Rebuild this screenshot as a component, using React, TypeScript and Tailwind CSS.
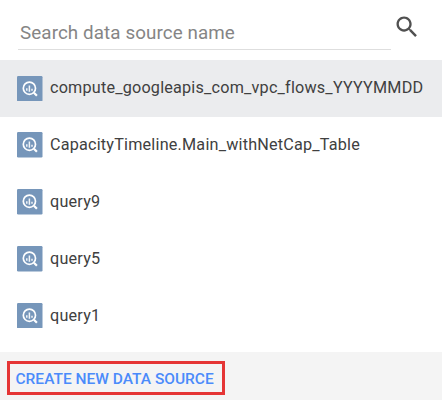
const sources = [
  'compute_googleapis_com_vpc_flows_YYYYMMDD',
  'CapacityTimeline.Main_withNetCap_Table',
  'query9',
  'query5',
  'query1',
];

function QueryIcon() {
  return (
    <svg className="h-[25.5px] w-[25.5px] shrink-0" viewBox="0 0 25.5 25.5" fill="none">
      <rect width="25.5" height="25.5" rx="1.2" fill="#7696ba" />
      <circle cx="12.4" cy="12.2" r="6.1" stroke="#fff" strokeWidth="1.7" />
      <path d="m16.9 16.7 3 3" stroke="#fff" strokeWidth="2.2" />
      <path d="M9.8 12.2v2.5M12.4 9.6v6.2M15 12.8v1.9" stroke="#fff" strokeOpacity=".9" strokeWidth="1.5" />
    </svg>
  );
}

export default function App() {
  return (
    <main className="flex h-[400px] w-[442px] flex-col overflow-hidden bg-white font-['Roboto',sans-serif]">
      <header className="flex h-[60px] shrink-0 pl-[18px]">
        <div className="flex h-[50px] w-[373px] shrink-0 items-end border-b border-[#dedede] pb-[3px] pl-[2px]">
          <span className="whitespace-nowrap text-[18.8px] leading-[26px] tracking-[0.1px] text-[#858585]">Search data source name</span>
        </div>
        <svg className="mt-[12.5px] ml-[2px] h-[28px] w-[28px] shrink-0" viewBox="0 0 24 24" fill="#505050">
          <path d="M15.5 14h-.79l-.28-.27C15.41 12.59 16 11.11 16 9.5 16 5.91 13.09 3 9.5 3S3 5.91 3 9.5 5.91 16 9.5 16c1.61 0 3.09-.59 4.23-1.57l.27.28v.79l5 4.99L20.49 19l-4.99-5zm-6 0C7.01 14 5 11.99 5 9.5S7.01 5 9.5 5 14 7.01 14 9.5 11.99 14 9.5 14z" />
        </svg>
      </header>
      <ul className="flex h-[292px] shrink-0 flex-col">
        {sources.map((name, i) => (
          <li key={name} className={`flex h-[56.8px] shrink-0 items-center gap-[7.5px] pl-[17px] ${i === 0 ? 'bg-[#ebecee]' : ''}`}>
            <QueryIcon />
            <span className="whitespace-nowrap text-[16.2px] leading-[24px] tracking-[0.2px] text-[#404040]">{name}</span>
          </li>
        ))}
      </ul>
      <footer className="flex-1 bg-[#f4f4f4] pt-[9px] pl-[7px]">
        <button className="flex h-[34px] w-[218px] items-center border-[3px] border-[#e53535] pl-[5.5px] pt-[3px] whitespace-nowrap text-[15.5px] font-medium text-[#4b8bfb]">
          CREATE NEW DATA SOURCE
        </button>
      </footer>
    </main>
  );
}
